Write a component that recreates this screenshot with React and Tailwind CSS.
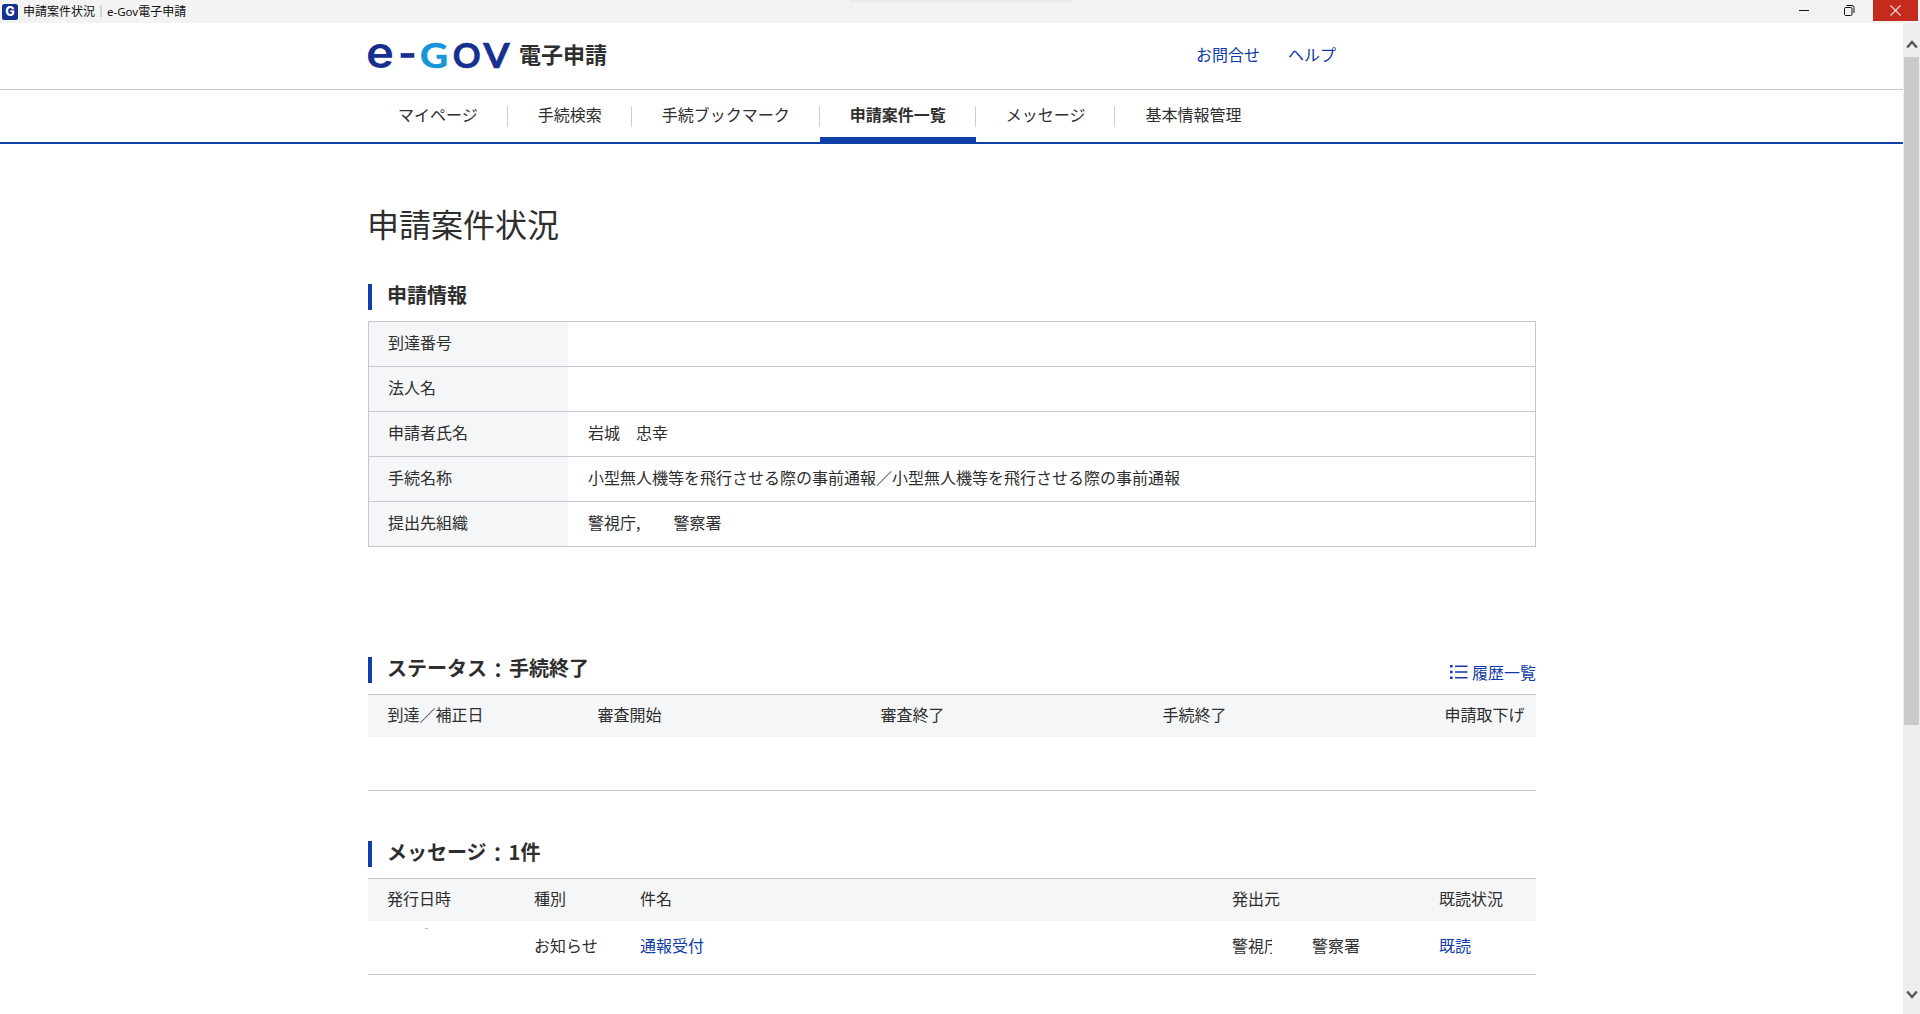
import React from 'react';

const navItems = [
    { label: 'マイページ' },
    { label: '手続検索' },
    { label: '手続ブックマーク' },
    { label: '申請案件一覧', active: true },
    { label: 'メッセージ' },
    { label: '基本情報管理' }
];

const applicationInfo = [
    { label: '到達番号', value: '' },
    { label: '法人名', value: '' },
    { label: '申請者氏名', value: '岩城　忠幸' },
    { label: '手続名称', value: '小型無人機等を飛行させる際の事前通報／小型無人機等を飛行させる際の事前通報' },
    { label: '提出先組織', value: '警視庁,', office: '警察署' }
];

const statusColumns = ['到達／補正日', '審査開始', '審査終了', '手続終了', '申請取下げ'];
const messageColumns = ['発行日時', '種別', '件名', '発出元', '既読状況'];

const TitleBar = () => (
    <div className="relative flex h-[23px] shrink-0 items-start justify-between bg-[#f3f3f3]">
        <div className="absolute left-[850px] top-0 h-1 w-[222px] bg-gradient-to-b from-[#e9e9e9] to-[#f3f3f3]" />
        <div className="flex h-[23px] items-center gap-[5px] pl-0.5">
            <svg width="16" height="16" viewBox="0 0 16 16">
                <rect width="16" height="16" rx="2.5" fill="#15308f" />
                <text x="8" y="12.3" textAnchor="middle" fontFamily="Inter, sans-serif" fontSize="12.5" fontWeight="800" fill="#fff">G</text>
            </svg>
            <span className="text-[12px] leading-none text-[#111]">
                申請案件状況<span className="text-[#777]">｜</span><span className="font-['Noto_Sans','Noto_Sans_CJK_JP',sans-serif] text-[11.5px]">e-Gov</span>電子申請
            </span>
        </div>
        <div className="flex pr-0.5">
            <div className="flex h-[21px] w-[45px] items-center justify-center pr-[3px]">
                <svg width="10" height="10" viewBox="0 0 10 10">
                    <path d="M0 4.5h10" stroke="#111" />
                </svg>
            </div>
            <div className="flex h-[21px] w-[45px] items-center justify-center pr-[2px]">
                <svg width="11" height="11" viewBox="0 0 11 11" fill="none" stroke="#111">
                    <rect x="0.5" y="2.5" width="7.5" height="8" rx="1.2" />
                    <path d="M2.5 0.5h5.5a2 2 0 0 1 2 2v5.5" />
                </svg>
            </div>
            <div className="flex h-[21px] w-[45px] items-center justify-center bg-[#c42b1c] pr-px">
                <svg width="11" height="11" viewBox="0 0 11 11">
                    <path d="M0.5 0.5l10 10M10.5 0.5l-10 10" stroke="#f6dcd9" strokeWidth="1.1" />
                </svg>
            </div>
        </div>
    </div>
);

const Logo = () => (
    <svg width="150" height="60" viewBox="-4 -17 150 60" className="-mx-1" fill="#17308f" stroke="#17308f" strokeWidth="0.6">
        <text x="-2" y="24.6" fontFamily="Inter, sans-serif" fontSize="43.5" fontWeight="600" textLength="28" lengthAdjust="spacingAndGlyphs" strokeWidth="0">e</text>
        <rect x="33" y="10.3" width="13" height="4.2" />
        <g fontFamily="Lato, sans-serif" fontSize="34" fontWeight="700">
            <text x="52" y="24.6" fill="#1795d8" stroke="#1795d8" textLength="28" lengthAdjust="spacingAndGlyphs">G</text>
            <text x="84.7" y="24.6" textLength="28" lengthAdjust="spacingAndGlyphs">O</text>
            <text x="115.2" y="24.6" textLength="26.5" lengthAdjust="spacingAndGlyphs">V</text>
        </g>
    </svg>
);

const Header = () => (
    <header className="h-[67px] border-b border-[#c9c9cd]">
        <div className="flex h-[65px] pl-[368px]">
            <div className="flex w-[828px] items-center gap-[9px]">
                <Logo />
                <span className="pb-[5px] text-[22px] font-bold leading-none">電子申請</span>
            </div>
            <div className="flex items-center gap-7 pb-1 text-[#0f3ba8]">
                <a>お問合せ</a>
                <a>ヘルプ</a>
            </div>
        </div>
    </header>
);

const Nav = () => (
    <nav className="flex h-[54px] border-b-2 border-[#0f40a8] pl-[368px]">
        {navItems.map((item, index) => (
            <div key={item.label} className="flex">
                <div
                    className={`flex h-[52px] items-center px-[30px] ${
                        item.active ? 'border-b-[5px] border-[#0f40a8] font-bold' : 'pb-[5px]'
                    }`}
                >
                    {item.label}
                </div>
                {index < navItems.length - 1 && (
                    <div className="-ml-px mt-4 h-[21px] w-px bg-[#cfcfd2]" />
                )}
            </div>
        ))}
    </nav>
);

const SectionTitle = ({ label, value }) => (
    <h2 className="flex h-[26px] items-start border-l-4 border-[#0f40a8] pl-[15px] text-[20px] font-bold leading-[22px]">
        <span>{label}</span>
        {value && (
            <>
                <span className="ml-px pt-[2px]">：</span>
                <span className="ml-px">{value}</span>
            </>
        )}
    </h2>
);

const InfoTable = () => (
    <div className="mt-[11px] border-x border-t border-[#c5c8d2]">
        {applicationInfo.map(row => (
            <div key={row.label} className="flex h-[45px] border-b border-[#c5c8d2]">
                <div className="w-[199px] bg-[#f4f6f8] pl-[19px] leading-[41px]">{row.label}</div>
                <div className="flex pl-5 leading-[41px]">
                    <span>{row.value}</span>
                    {row.office && <span className="ml-[33px]">{row.office}</span>}
                </div>
            </div>
        ))}
    </div>
);

const StatusTable = () => (
    <div className="mt-[11px] h-[97px] border-y border-[#c6c6c8]">
        <div className="grid h-[42px] grid-cols-[210px_283px_282px_282px_1fr] bg-[#f4f6f8] pl-[19.5px] leading-[39px]">
            {statusColumns.map(column => (
                <div key={column} className="whitespace-nowrap">{column}</div>
            ))}
        </div>
    </div>
);

const MessageTable = () => (
    <div className="mt-[11px] h-[97px] border-y border-[#c6c6c8]">
        <div className="grid h-[42px] grid-cols-[147px_106px_592px_207px_1fr] bg-[#f4f6f8] pl-[19px] leading-[39px]">
            {messageColumns.map(column => (
                <div key={column}>{column}</div>
            ))}
        </div>
        <div className="grid h-[53px] grid-cols-[147px_106px_592px_207px_1fr] pl-[19px] leading-[48px]">
            <div className="pl-[38px] pt-[7px]">
                <div className="h-px w-[3px] bg-[#b5b5b5]" />
            </div>
            <div>お知らせ</div>
            <a className="text-[#0f3ba8]">通報受付</a>
            <div className="flex">
                <span className="w-10 overflow-hidden whitespace-nowrap">警視庁</span>
                <span className="ml-10">警察署</span>
            </div>
            <a className="text-[#0f3ba8]">既読</a>
        </div>
    </div>
);

const ScrollBar = () => (
    <div className="flex w-[17px] shrink-0 flex-col items-center bg-[#eeeeee]">
        <div className="flex h-[34px] items-end pb-[8px]">
            <svg width="12" height="9" viewBox="0 0 12 9" fill="none">
                <path d="M1.2 7.5L6 2l4.8 5.5" stroke="#555" strokeWidth="2.4" />
            </svg>
        </div>
        <div className="h-[668px] w-[15px] bg-[#cbcbcb]" />
        <div className="mt-auto pb-[15px]">
            <svg width="12" height="9" viewBox="0 0 12 9" fill="none">
                <path d="M1.2 1.5L6 7l4.8-5.5" stroke="#555" strokeWidth="2.4" />
            </svg>
        </div>
    </div>
);

const App = () => {
    return (
        <div className="flex h-[1014px] w-[1920px] flex-col overflow-hidden bg-white font-['Noto_Sans_CJK_JP',sans-serif] text-[16px] leading-none text-[#2e2e2e]">
            <TitleBar />
            <div className="flex min-h-0 flex-1">
                <div className="w-[1903px]">
                    <Header />
                    <Nav />
                    <main className="ml-[368px] w-[1168px]">
                        <h1 className="-ml-px pt-[59px] text-[32px] leading-[40px]">申請案件状況</h1>

                        <section className="mt-[41px]">
                            <SectionTitle label="申請情報" />
                            <InfoTable />
                        </section>

                        <section className="mt-[110px]">
                            <div className="flex items-start justify-between">
                                <SectionTitle label="ステータス" value="手続終了" />
                                <a className="flex items-center gap-1 pt-[7px] text-[#0f3ba8]">
                                    <svg width="18" height="16" viewBox="0 0 18 16" fill="currentColor">
                                        <path d="M0 1h2.6v2.6H0zM0 6.7h2.6v2.6H0zM0 12.4h2.6v2.6H0zM5 1.5h12.5v1.6H5zM5 7.2h12.5v1.6H5zM5 12.9h12.5v1.6H5z" />
                                    </svg>
                                    履歴一覧
                                </a>
                            </div>
                            <StatusTable />
                        </section>

                        <section className="mt-[50px]">
                            <SectionTitle label="メッセージ" value="1件" />
                            <MessageTable />
                        </section>
                    </main>
                </div>
                <ScrollBar />
            </div>
        </div>
    );
};

export default App;
